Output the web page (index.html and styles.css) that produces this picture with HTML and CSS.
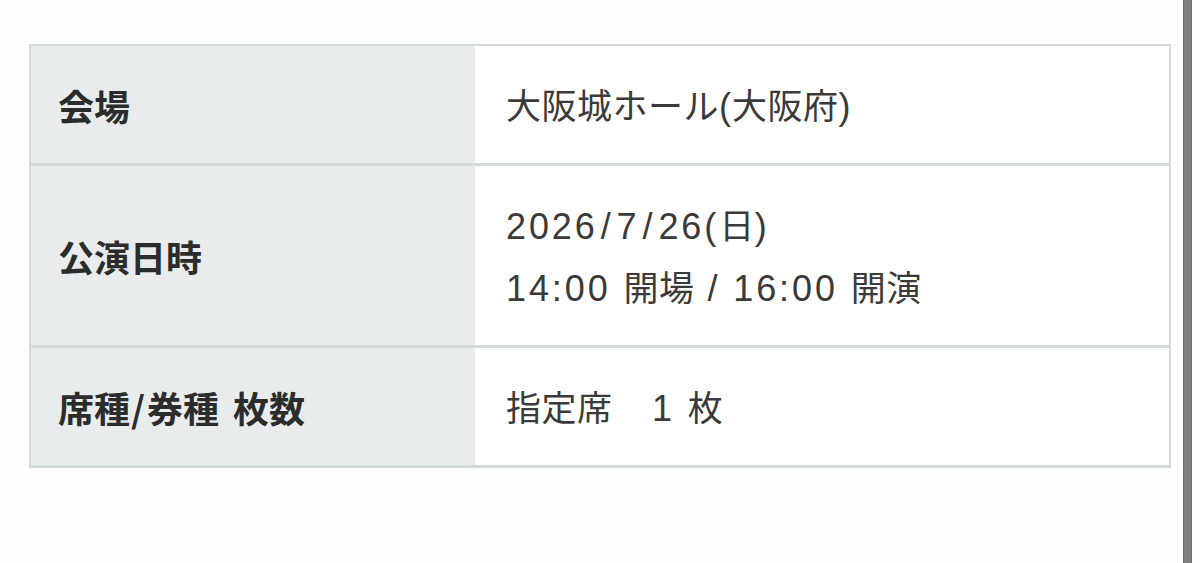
FILE: index.html
```html
<!DOCTYPE html>
<html lang="ja">
<head>
<meta charset="utf-8">
<title>公演情報</title>
<link rel="stylesheet" href="styles.css">
</head>
<body>
<div class="page">
  <div class="content">
    <div class="info">
      <div class="row">
        <div class="label">会場</div>
        <div class="value">大阪城ホール<span class="paren">(</span>大阪府<span class="paren">)</span></div>
      </div>
      <div class="row">
        <div class="label">公演日時</div>
        <div class="value"><span class="lat">2026<span class="sl">/</span>7<span class="sl">/</span>26(</span>日<span class="lat">)</span><br><span class="lat">14:00 </span>開場<span class="lat"> / 16:00 </span>開演</div>
      </div>
      <div class="row">
        <div class="label">席種<span class="slash">/</span>券種<span class="sp"> </span>枚数</div>
        <div class="value">指定席　<span class="lat one">1 </span>枚</div>
      </div>
    </div>
  </div>
  <div class="scrollbar"></div>
</div>
</body>
</html>
```

FILE: styles.css
```css
html, body {
  margin: 0;
  padding: 0;
  background: #fefefe;
}
body {
  font-family: "Noto Sans CJK JP", "Noto Sans", sans-serif;
  color: #333;
}
.page {
  display: flex;
  height: 563px;
  width: 1200px;
}
.content {
  width: 1183px;
  padding: 44px 0 0 29px;
  box-sizing: border-box;
}
.info {
  width: 1142px;
  border: 2px solid #d4dada;
  border-bottom: 0;
  box-sizing: border-box;
}
.row {
  display: flex;
  border-bottom: 3px solid #d4dada;
}
.label {
  width: 444px;
  flex: none;
  background: #e8ecec;
  font-weight: 700;
  font-size: 36px;
  color: #2c2c2c;
  display: flex;
  align-items: center;
  padding-left: 27px;
  box-sizing: border-box;
  white-space: pre;
}
.slash {
  margin: 0 2px 0 1px;
  line-height: 0;
}
.sp {
  font-family: "Liberation Sans", sans-serif;
  margin-right: 4px;
  line-height: 0;
}
.value {
  flex: 1;
  background: #fff;
  font-size: 35px;
  line-height: 62px;
  color: #3a3a3a;
  padding: 27px 0 28px 31px;
  letter-spacing: 0.5px;
  white-space: pre;
}
.lat {
  font-family: "Liberation Sans", sans-serif;
  font-size: 36px;
  letter-spacing: 2.9px;
  line-height: 0;
}
.sl {
  margin: 0 3px;
}
.one {
  margin-left: 4px;
}
.paren {
  font-family: "Liberation Sans", sans-serif;
  font-size: 36px;
  letter-spacing: 1px;
  line-height: 0;
}
.scrollbar {
  width: 9px;
  flex: none;
  background: #7f7f7f;
  box-shadow: inset 1px 0 0 #6e6e6e, inset -1px 0 0 #6e6e6e;
}
```
